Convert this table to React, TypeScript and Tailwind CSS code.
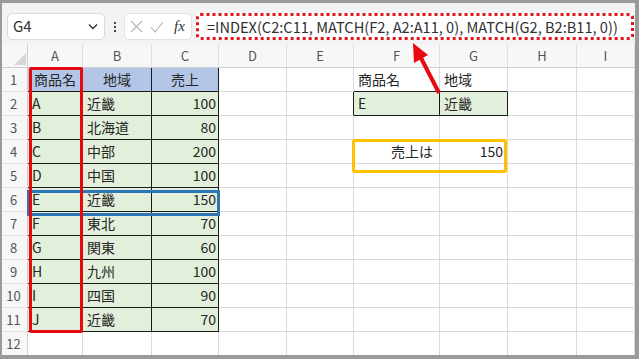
import React from "react";

const FONT = { fontFamily: '"Noto Sans CJK JP", "Noto Sans", sans-serif' };

const inTable = (r: number, c: number) =>
  (r >= 1 && r <= 11 && c >= 0 && c <= 2) || (r === 2 && (c === 5 || c === 6));

const letters = ["A", "B", "C", "D", "E", "F", "G", "H", "I"];
const names = ["A", "B", "C", "D", "E", "F", "G", "H", "I", "J"];
const regions = ["近畿", "北海道", "中部", "中国", "近畿", "東北", "関東", "九州", "四国", "近畿"];
const sales = ["100", "80", "200", "100", "150", "70", "60", "100", "90", "70"];

type CellContent = { text: string; align: "left" | "right" | "center"; pr?: string };

function content(r: number, c: number): CellContent | null {
  if (r === 1) {
    if (c === 0) return { text: "商品名", align: "center" };
    if (c === 1) return { text: "地域", align: "center" };
    if (c === 2) return { text: "売上", align: "center" };
    if (c === 5) return { text: "商品名", align: "left" };
    if (c === 6) return { text: "地域", align: "left" };
  }
  if (r >= 2 && r <= 11) {
    const i = r - 2;
    if (c === 0) return { text: names[i], align: "left" };
    if (c === 1) return { text: regions[i], align: "left" };
    if (c === 2) return { text: sales[i], align: "right" };
  }
  if (r === 2) {
    if (c === 5) return { text: "E", align: "left" };
    if (c === 6) return { text: "近畿", align: "left" };
  }
  if (r === 4) {
    if (c === 5) return { text: "売上は", align: "right", pr: "pr-[6px]" };
    if (c === 6) return { text: "150", align: "right", pr: "pr-[4px]" };
  }
  return null;
}

function Cell({ r, c }: { r: number; c: number }) {
  const rb = inTable(r, c) || inTable(r, c + 1);
  const bb = inTable(r, c) || inTable(r + 1, c);
  const bg = r === 1 && c <= 2 ? "bg-[#b4c6e7]" : inTable(r, c) ? "bg-[#e2efda]" : "bg-white";
  const ct = content(r, c);
  const align =
    ct?.align === "right"
      ? "justify-end " + (ct.pr ?? "pr-[2px]")
      : ct?.align === "center"
      ? "justify-center"
      : "justify-start pl-[4px]";
  return (
    <div
      className={`flex items-center overflow-hidden whitespace-nowrap border-r border-b text-[14px] text-[#262626] ${bg} ${
        rb ? "border-r-[#1a1a1a]" : "border-r-[#dadada]"
      } ${bb ? "border-b-[#1a1a1a]" : "border-b-[#dadada]"} ${align}`}
    >
      {ct?.text}
    </div>
  );
}

export default function App() {
  const rows = Array.from({ length: 12 }, (_, i) => i + 1);
  return (
    <div
      className="relative w-[639px] h-[359px] overflow-hidden bg-[#f3f3f3] border-t-[3px] border-l-[2px] border-r-[4px] border-b-[4px] border-[#9a9a9a] flex flex-col"
      style={FONT}
    >
      {/* Formula bar */}
      <div className="h-[41px] shrink-0 flex items-start pt-[10px] pl-[5px] pr-[1px] gap-0">
        <div className="w-[98px] h-[27px] bg-white border border-[#dcdcdc] rounded-[5px] flex items-center justify-between pl-[5px] pr-[6px]">
          <span className="text-[15px] text-[#303030]">G4</span>
          <svg width="10" height="7" viewBox="0 0 10 7">
            <path d="M1 1.5 L5 5.5 L9 1.5" fill="none" stroke="#333" strokeWidth="1.4" />
          </svg>
        </div>
        <div className="w-[19px] h-[27px] flex flex-col items-center justify-center gap-[2px]">
          <div className="w-[2px] h-[2px] bg-[#444]" />
          <div className="w-[2px] h-[2px] bg-[#444]" />
          <div className="w-[2px] h-[2px] bg-[#444]" />
        </div>
        <div className="w-[68px] h-[27px] bg-white border border-[#e2e2e2] rounded-[5px] flex items-center pl-[5px] gap-[7px]">
          <svg width="13" height="13" viewBox="0 0 13 13">
            <path d="M1 1 L12 12 M12 1 L1 12" stroke="#b5b5b5" strokeWidth="1.1" fill="none" />
          </svg>
          <svg width="14" height="12" viewBox="0 0 14 12">
            <path d="M1 6 L5 11 L13 1" stroke="#b5b5b5" strokeWidth="1.1" fill="none" />
          </svg>
          <span
            className="ml-[3px] text-[15px] italic text-[#333]"
            style={{ fontFamily: '"Liberation Serif", serif' }}
          >
            fx
          </span>
        </div>
        <div className="relative ml-[4px] flex-1 h-[27px] bg-white rounded-[3px] flex items-center pl-[11px] text-[14.6px] text-[#303030] whitespace-nowrap overflow-hidden">
          <svg className="absolute inset-0 pointer-events-none" width="100%" height="100%">
            <rect
              x="1.5"
              y="1.5"
              width="calc(100% - 3px)"
              height="24"
              rx="3"
              fill="none"
              stroke="#e0161b"
              strokeWidth="3"
              strokeDasharray="3 3"
              style={{ width: "calc(100% - 3px)" }}
            />
          </svg>
          =INDEX(C2:C11, MATCH(F2, A2:A11, 0), MATCH(G2, B2:B11, 0))
        </div>
      </div>

      {/* Sheet grid */}
      <div className="flex-1 grid grid-cols-[26px_55px_69px_67px_68px_67px_86px_68px_69px_1fr] grid-rows-[24px_repeat(12,24px)] bg-white overflow-hidden">
        <div className="relative bg-[#f7f7f7] border-r border-b border-[#cfcfcf]">
          <svg className="absolute right-[1px] bottom-[2px]" width="12" height="12" viewBox="0 0 12 12">
            <path d="M12 0 L12 12 L0 12 Z" fill="#d6d6d6" />
          </svg>
        </div>
        {letters.map((l) => (
          <div
            key={l}
            className="bg-[#f7f7f7] border-r border-b border-r-[#e0e0e0] border-b-[#cfcfcf] flex items-center justify-center text-[13px] text-[#555]"
          >
            {l}
          </div>
        ))}
        {rows.map((r) => (
          <React.Fragment key={r}>
            <div className="bg-[#f7f7f7] border-r border-b border-r-[#cfcfcf] border-b-[#e0e0e0] flex items-center justify-center pr-[2px] text-[13px] text-[#555]">
              {r}
            </div>
            {letters.map((_, c) => (
              <Cell key={c} r={r} c={c} />
            ))}
          </React.Fragment>
        ))}
      </div>

      {/* Overlays */}
      <div className="absolute left-[25px] top-[187px] w-[193px] h-[26px] border-[3px] border-[#2e75b6]" />
      <div className="absolute left-[27px] top-[64px] w-[54px] h-[266px] border-[3px] border-[#e8090f] rounded-[2px]" />
      <div className="absolute left-[350px] top-[136px] w-[155px] h-[34px] border-[3px] border-[#ffc000] rounded-[3px]" />
      <svg className="absolute left-[-2px] top-[-3px] pointer-events-none" width="639" height="359" viewBox="0 0 639 359">
        <line x1="439" y1="93" x2="421" y2="58" stroke="#e8090f" strokeWidth="4" />
        <polygon points="413,43 428,55 414,63" fill="#e8090f" />
      </svg>
    </div>
  );
}
